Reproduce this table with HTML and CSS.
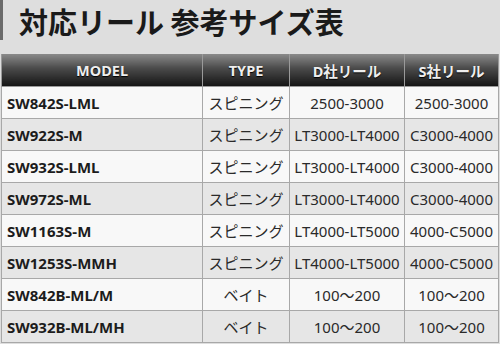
FILE: index.html
```html
<!DOCTYPE html>
<html lang="ja">
<head>
<meta charset="utf-8">
<link rel="stylesheet" href="styles.css">
</head>
<body>
<div class="page">
  <h1 class="title">対応リール 参考サイズ表</h1>
  <table class="sizes">
    <colgroup>
      <col class="c-model"><col class="c-type"><col class="c-d"><col class="c-s">
    </colgroup>
    <thead>
      <tr><th>MODEL</th><th>TYPE</th><th>D社リール</th><th>S社リール</th></tr>
    </thead>
    <tbody>
      <tr><td class="model">SW842S-LML</td><td>スピニング</td><td>2500-3000</td><td>2500-3000</td></tr>
      <tr><td class="model">SW922S-M</td><td>スピニング</td><td>LT3000-LT4000</td><td>C3000-4000</td></tr>
      <tr><td class="model">SW932S-LML</td><td>スピニング</td><td>LT3000-LT4000</td><td>C3000-4000</td></tr>
      <tr><td class="model">SW972S-ML</td><td>スピニング</td><td>LT3000-LT4000</td><td>C3000-4000</td></tr>
      <tr><td class="model">SW1163S-M</td><td>スピニング</td><td>LT4000-LT5000</td><td>4000-C5000</td></tr>
      <tr><td class="model">SW1253S-MMH</td><td>スピニング</td><td>LT4000-LT5000</td><td>4000-C5000</td></tr>
      <tr><td class="model">SW842B-ML/M</td><td>ベイト</td><td>100～200</td><td>100～200</td></tr>
      <tr><td class="model">SW932B-ML/MH</td><td>ベイト</td><td>100～200</td><td>100～200</td></tr>
    </tbody>
  </table>
</div>
</body>
</html>
```
FILE: styles.css
```css
html, body {
  margin: 0;
  padding: 0;
  background: #dedede;
  font-family: "Noto Sans", "Noto Sans CJK JP", sans-serif;
}
.page {
  width: 500px;
  height: 344px;
  overflow: hidden;
}
.title {
  margin: 0;
  height: 40px;
  padding-left: 16px;
  padding-top: 2px;
  border-left: 3px solid #6a6a6a;
  font-family: "Noto Sans CJK JP", sans-serif;
  font-size: 29px;
  font-weight: 700;
  line-height: 38px;
  color: #1a1a1a;
  box-sizing: border-box;
}
.sizes {
  margin-top: 14px;
  margin-left: 1px;
  width: 497px;
  border-collapse: collapse;
  table-layout: fixed;
}
.c-model { width: 201px; }
.c-type { width: 87px; }
.c-d { width: 115px; }
.c-s { width: 94px; }
.sizes th {
  height: 32px;
  padding: 0;
  background: linear-gradient(#8a8a8a, #4a4a4a 45%, #151515);
  color: #eeeeee;
  font-size: 14.5px;
  font-weight: 700;
  text-align: center;
  border: 1px solid #9a9a9a;
  border-top: 0;
  text-shadow: 0 1px 1px #000;
}
.sizes td {
  height: 31px;
  padding: 0;
  border: 1px solid #a8a8a8;
  font-size: 15px;
  color: #2a2a2a;
  text-align: center;
  white-space: nowrap;
  background: #f8f8f8;
}
.sizes tbody tr:nth-child(even) td {
  background: #e6e6e6;
}
.sizes td.model {
  text-align: left;
  padding-left: 5px;
  font-weight: 700;
  color: #1c1c1c;
}
```
